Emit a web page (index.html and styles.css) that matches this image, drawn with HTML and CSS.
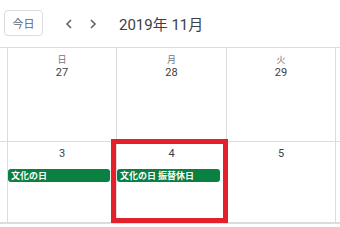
FILE: index.html
```html
<!DOCTYPE html>
<html lang="ja">
<head>
    <meta charset="UTF-8">
    <title>カレンダー</title>
    <link rel="stylesheet" href="styles.css">
</head>
<body>
    <div class="toolbar">
        <button class="today-btn">今日</button>
        <div class="nav">
            <span class="nav-btn">
                <svg width="8" height="10" viewBox="0 0 8 10"><polyline points="6,1 2,5 6,9" fill="none" stroke="#5f6368" stroke-width="1.6"/></svg>
            </span>
            <span class="nav-btn">
                <svg width="8" height="10" viewBox="0 0 8 10"><polyline points="2,1 6,5 2,9" fill="none" stroke="#5f6368" stroke-width="1.6"/></svg>
            </span>
        </div>
        <h1 class="title">2019年 11月</h1>
    </div>

    <div class="month">
        <div class="week first-week">
            <div class="gutter"></div>
            <div class="day">
                <div class="dow">日</div>
                <div class="date">27</div>
            </div>
            <div class="day">
                <div class="dow">月</div>
                <div class="date">28</div>
            </div>
            <div class="day">
                <div class="dow">火</div>
                <div class="date">29</div>
            </div>
            <div class="rest"></div>
        </div>
        <div class="week second-week">
            <div class="gutter"></div>
            <div class="day">
                <div class="date">3</div>
                <div class="event">文化の日</div>
            </div>
            <div class="day">
                <div class="date">4</div>
                <div class="event">文化の日 振替休日</div>
            </div>
            <div class="day">
                <div class="date">5</div>
            </div>
            <div class="rest"></div>
        </div>
        <div class="week">
            <div class="gutter"></div>
            <div class="day"></div>
            <div class="day"></div>
            <div class="day"></div>
            <div class="rest"></div>
        </div>

        <!-- annotation box over the 4th -->
        <div class="highlight"></div>
    </div>
</body>
</html>
```

FILE: styles.css
```css
body {
    margin: 0;
    width: 340px;
    height: 227px;
    overflow: hidden;
    background: #fff;
    font-family: Roboto, "Noto Sans CJK JP", sans-serif;
    color: #3c4043;
}

.toolbar {
    height: 47px;
    display: flex;
    align-items: center;
    padding-left: 4px;
    box-sizing: border-box;
}

.today-btn {
    width: 39px;
    height: 26px;
    margin-top: -1px;
    padding: 0;
    border: 1px solid #dadce0;
    border-radius: 4px;
    background: #fff;
    color: #5f6368;
    font-family: "Noto Sans CJK JP", sans-serif;
    font-size: 11px;
}

.nav {
    display: flex;
    gap: 16px;
    margin-left: 22px;
}

.nav-btn {
    width: 8px;
    height: 10px;
    display: flex;
}

.title {
    margin: 0 0 0 22px;
    font-size: 15px;
    font-weight: 400;
    color: #3c4043;
}

.month {
    position: relative;
    border-top: 1px solid #dadce0;
}

.week {
    display: grid;
    grid-template-columns: 8px 109px 110px 109px 1fr;
    border-bottom: 1px solid #dadce0;
}

.first-week {
    height: 93px;
}

.second-week {
    height: 80px;
}

.week:last-of-type {
    height: 40px;
}

.gutter,
.day {
    border-right: 1px solid #dadce0;
}

.day {
    text-align: center;
}

.dow {
    margin-top: 6px;
    font-family: "Noto Sans CJK JP", sans-serif;
    font-size: 9px;
    line-height: 12px;
    color: #70757a;
}

.date {
    font-size: 11px;
    line-height: 14px;
    color: #3c4043;
}

.second-week .date {
    margin-top: 5px;
}

.event {
    height: 13px;
    margin: 8px 6px 0 0;
    padding-left: 3px;
    border-radius: 3px;
    background: #0b8043;
    color: #fff;
    font-family: "Noto Sans CJK JP", sans-serif;
    font-size: 9px;
    font-weight: 700;
    line-height: 13px;
    text-align: left;
    white-space: nowrap;
}

.second-week .day:first-of-type .event {
    margin-left: -1px;
}

.highlight {
    position: absolute;
    left: 111px;
    top: 91px;
    width: 117px;
    height: 84px;
    box-sizing: border-box;
    border: 5px solid #e3202b;
}
```
